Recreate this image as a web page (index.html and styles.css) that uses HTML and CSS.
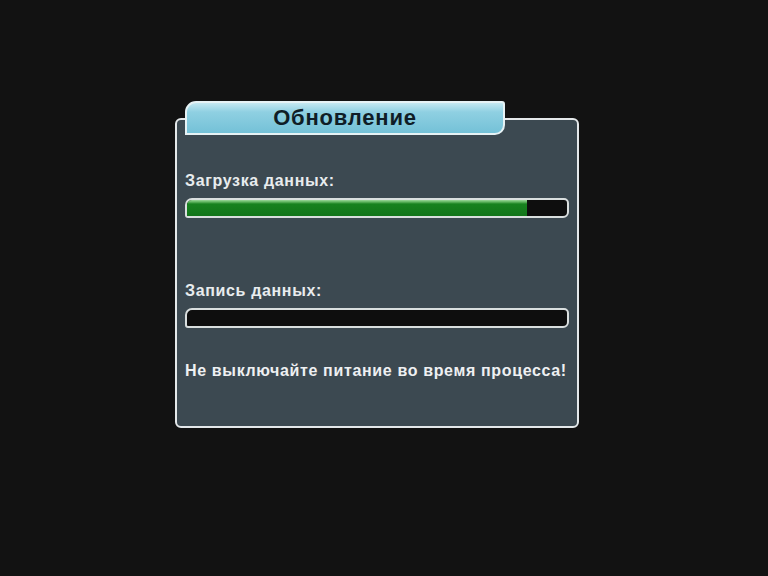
FILE: index.html
```html
<!DOCTYPE html>
<html lang="ru">
<head>
    <meta charset="UTF-8">
    <title>Обновление</title>
    <link rel="stylesheet" href="styles.css">
</head>
<body>

<!-- Update dialog -->
<div class="dialog">
    <div class="dialog-tab">Обновление</div>

    <div class="dialog-body">
        <div class="label">Загрузка данных:</div>
        <div class="progress">
            <div class="progress-fill" style="width: 89.5%"></div>
        </div>

        <div class="label label-second">Запись данных:</div>
        <div class="progress">
            <div class="progress-fill" style="width: 0%"></div>
        </div>

        <div class="warning">Не выключайте питание во время процесса!</div>
    </div>
</div>

</body>
</html>
```

FILE: styles.css
```css
body {
    margin: 0;
    background-color: #121212;
    font-family: "Liberation Sans", Arial, sans-serif;
    height: 576px;
    overflow: hidden;
}

.dialog {
    width: 404px;
    margin-left: 175px;
    padding-top: 101px;
}

/* Title tab sitting over the top border */
.dialog-tab {
    position: relative;
    z-index: 1;
    box-sizing: border-box;
    width: 320px;
    height: 34px;
    margin-left: 10px;
    border: 2px solid #e6f2f5;
    border-radius: 11px 3px 10px 0;
    background: linear-gradient(#c4e8f1 0%, #8fd0e2 30%, #74c1d7 100%);
    color: #0f1d26;
    font-size: 22px;
    font-weight: bold;
    line-height: 29px;
    letter-spacing: 0.8px;
    text-align: center;
}

.dialog-body {
    box-sizing: border-box;
    height: 310px;
    margin-top: -17px;
    padding: 51px 8px 0 8px;
    border: 2px solid #e4e8ea;
    border-radius: 6px;
    background-color: #3c4951;
}

.label {
    color: #e8ecee;
    font-size: 16px;
    font-weight: bold;
    line-height: 20px;
    letter-spacing: 0.65px;
}

.label-second {
    margin-top: 63px;
}

/* Progress bars */
.progress {
    box-sizing: border-box;
    height: 20px;
    margin-top: 7px;
    border: 2px solid #d9dede;
    border-radius: 7px 5px 6px 3px;
    background-color: #0e0e0e;
    overflow: hidden;
}

.progress-fill {
    height: 100%;
    background: linear-gradient(#9bd89b 0px, #5fb45f 2px, #17821f 4px, #12751a 100%);
}

.warning {
    margin-top: 33px;
    color: #eef0f2;
    font-size: 16px;
    font-weight: bold;
    line-height: 20px;
    letter-spacing: 0.65px;
}
```
